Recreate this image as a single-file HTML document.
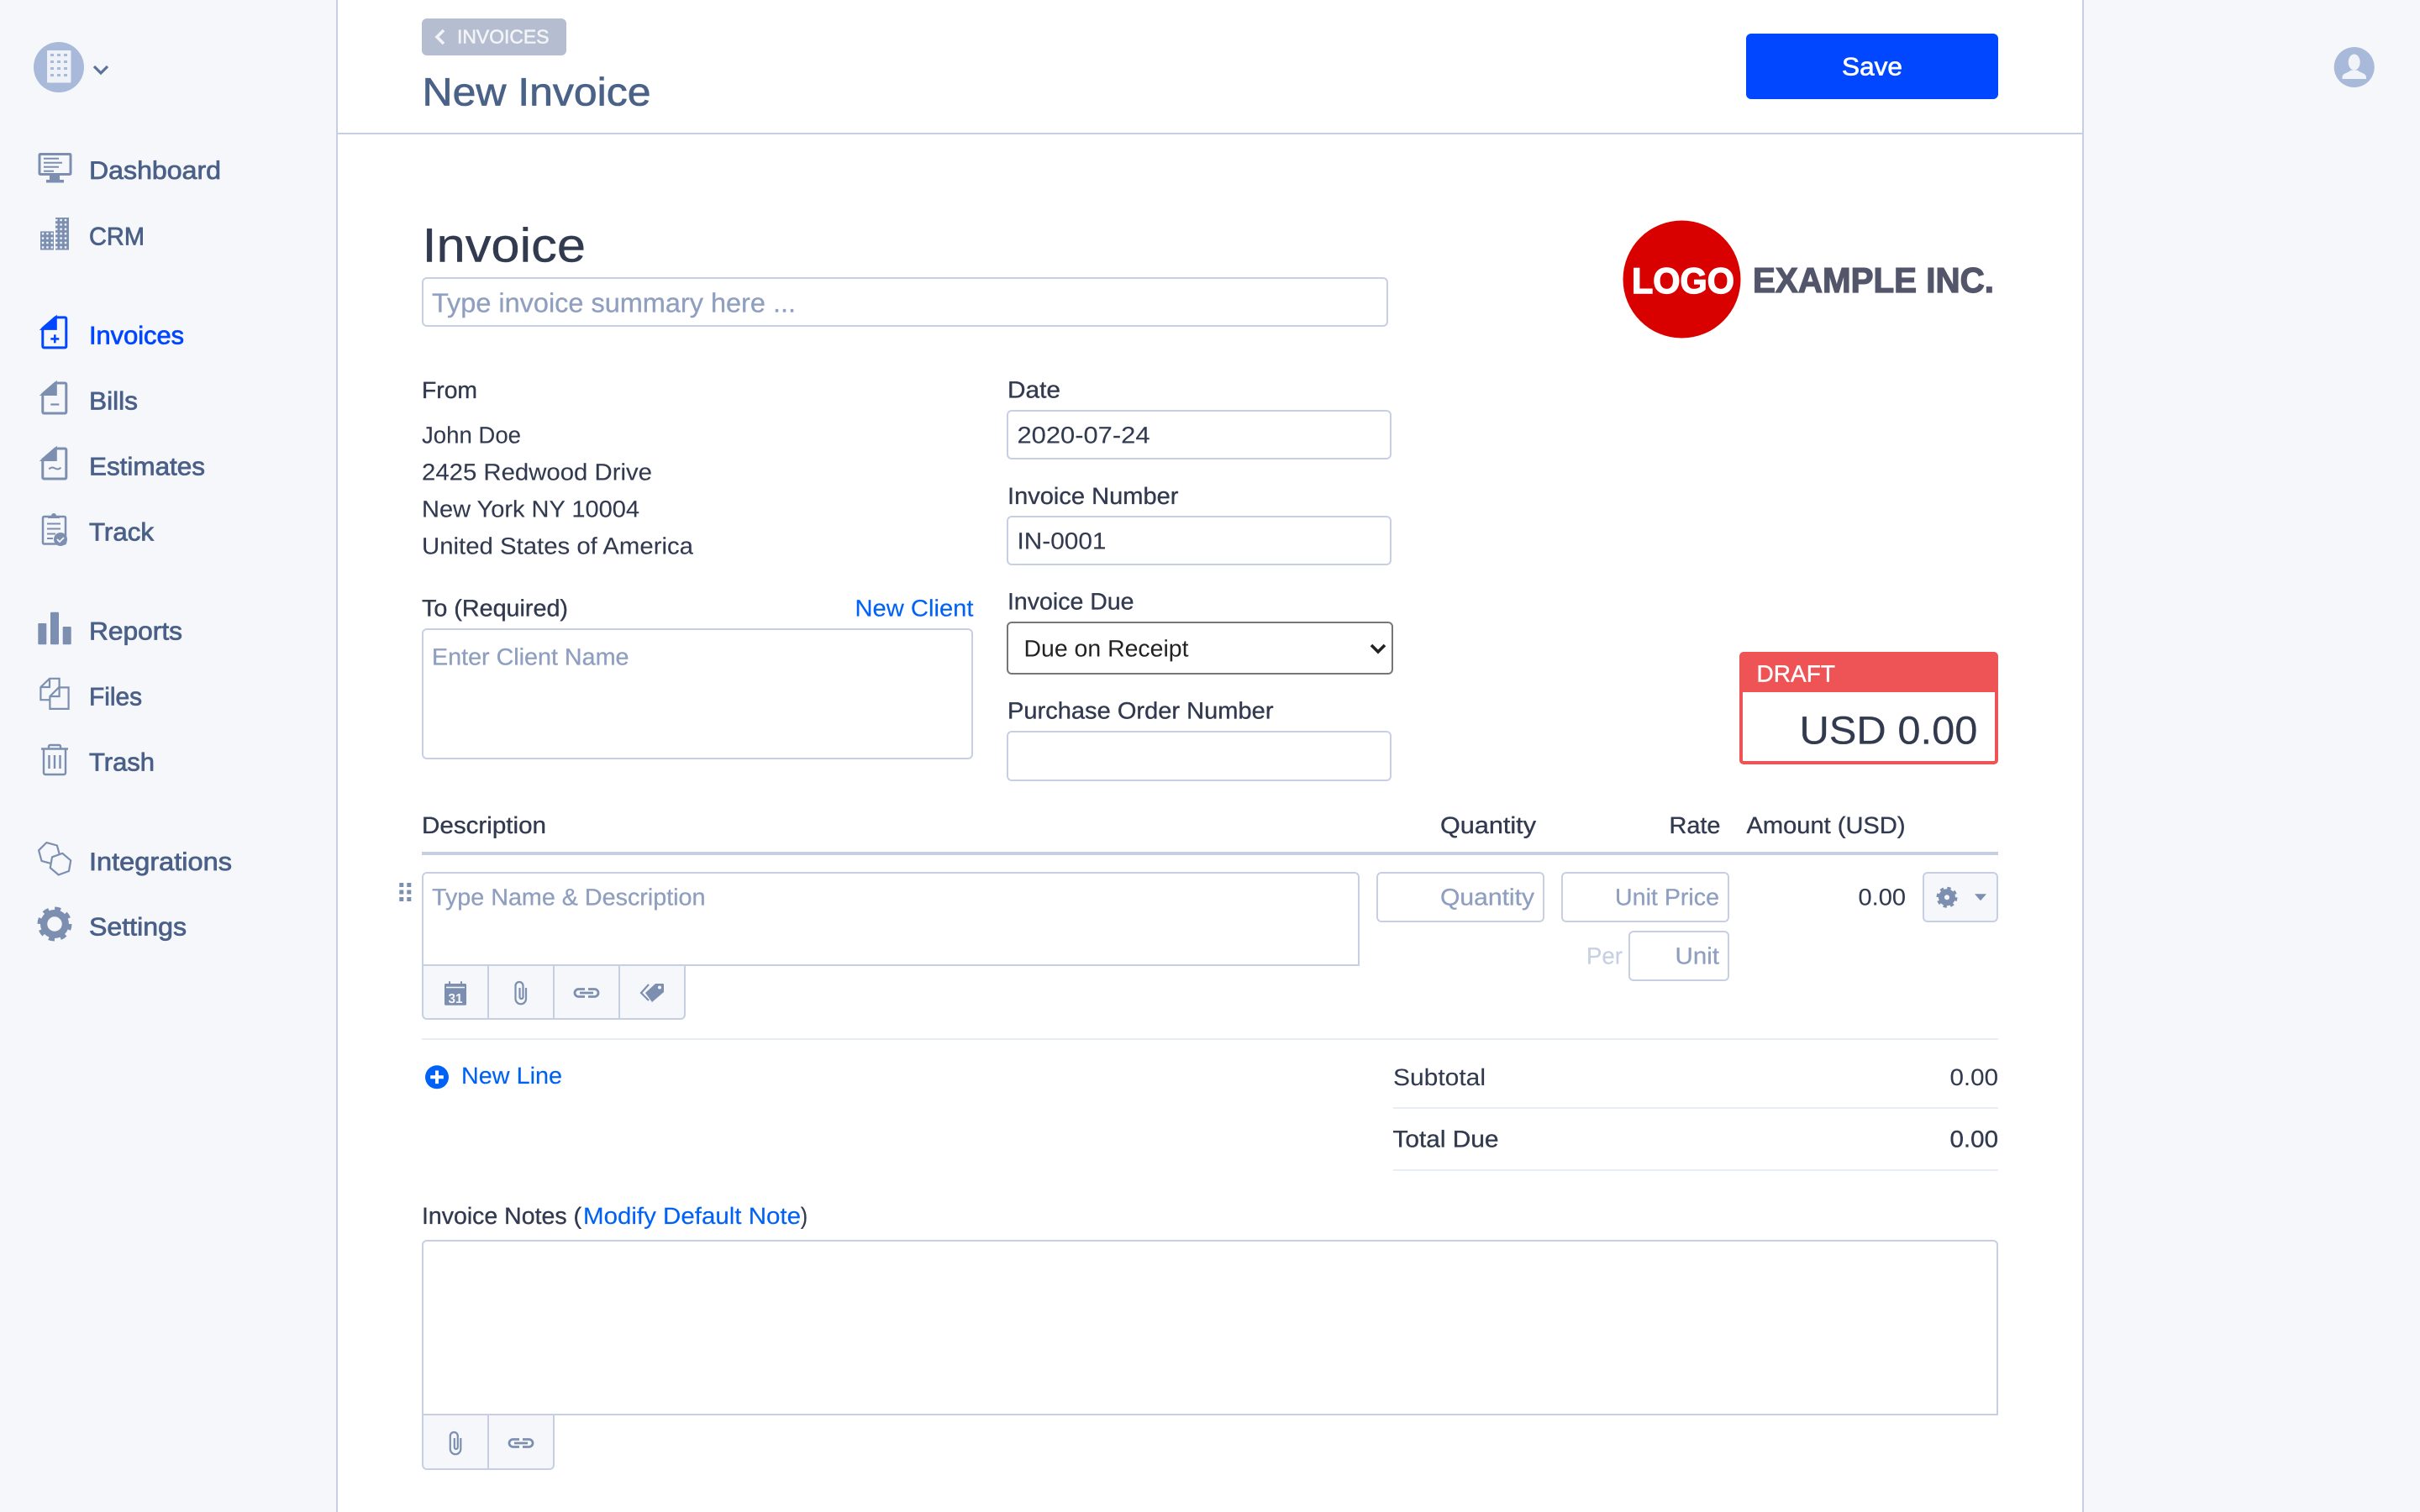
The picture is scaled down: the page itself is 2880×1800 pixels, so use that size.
<!DOCTYPE html>
<html lang="en"><head><meta charset="utf-8"><title>New Invoice</title>
<style>
html,body{margin:0;padding:0;background:#fff;width:2880px;height:1800px;overflow:hidden}
.a{position:absolute;box-sizing:border-box}
.b{position:absolute;box-sizing:border-box;border:2px solid #c6d0e2;border-radius:6px;background:#fff}
.g{background:#f5f7fa}
svg{position:absolute;left:0;top:0}
text{font-family:"Liberation Sans",sans-serif;text-rendering:geometricPrecision;white-space:pre}
.n{font-size:30px;fill:#4a6088;stroke:#4a6088;stroke-width:.75px}
.l{font-size:28px;fill:#323a50;stroke:#323a50;stroke-width:.35px}
.p{font-size:28px;fill:#8f9fc0;stroke:#8f9fc0;stroke-width:.3px}
.t{font-size:28px;fill:#323a50;stroke:#323a50;stroke-width:.1px}
.k{font-size:28px;fill:#0062f5;stroke:#0062f5;stroke-width:.15px}
.i{fill:#7d8fb0}
.o{fill:none;stroke:#7d8fb0;stroke-width:3}
</style></head><body>
<div class="a g" style="left:0;top:0;width:402px;height:1800px;border-right:2px solid #c6d0e2"></div>
<div class="a g" style="left:2478px;top:0;width:402px;height:1800px;border-left:2px solid #c6d0e2"></div>
<div class="a" style="left:402px;top:158px;width:2076px;height:2px;background:#c6d0e2"></div>
<div class="a" style="left:502px;top:22px;width:172px;height:44px;background:#b5bdd0;border-radius:6px"></div>
<div class="a" style="left:2078px;top:40px;width:300px;height:78px;background:#0047ff;border-radius:6px"></div>
<div class="b" style="left:502px;top:330px;width:1150px;height:59px"></div>
<div class="b" style="left:1198px;top:488px;width:458px;height:59px"></div>
<div class="b" style="left:1198px;top:614px;width:458px;height:59px"></div>
<div class="b" style="left:1198px;top:740px;width:460px;height:63px;border-color:#767676"></div>
<div class="b" style="left:1198px;top:870px;width:458px;height:59.500px"></div>
<div class="b" style="left:502px;top:748px;width:656px;height:156px"></div>
<div class="a" style="left:2070px;top:776px;width:308px;height:134px;border:4px solid #ee5355;border-top-width:48px;border-radius:5px;background:#fff"></div>
<div class="a" style="left:502px;top:1014px;width:1876px;height:4px;background:#c6d0e2"></div>
<div class="b" style="left:502px;top:1038px;width:1116px;height:112px;border-radius:6px 6px 0 0"></div>
<div class="a g" style="left:502px;top:1148px;width:314px;height:66px;border:2px solid #c6d0e2;border-radius:0 0 6px 6px"></div>
<div class="a" style="left:580px;top:1148px;width:2px;height:66px;background:#c6d0e2"></div>
<div class="a" style="left:658px;top:1148px;width:2px;height:66px;background:#c6d0e2"></div>
<div class="a" style="left:736px;top:1148px;width:2px;height:66px;background:#c6d0e2"></div>
<div class="b" style="left:1638px;top:1038px;width:200px;height:60px"></div>
<div class="b" style="left:1858px;top:1038px;width:200px;height:60px"></div>
<div class="b" style="left:1938px;top:1108px;width:120px;height:60px"></div>
<div class="b g" style="left:2288px;top:1038px;width:90px;height:60px"></div>
<div class="a" style="left:502px;top:1236px;width:1876px;height:2px;background:#e8ecf5"></div>
<div class="a" style="left:1658px;top:1318px;width:720px;height:2px;background:#e8ecf5"></div>
<div class="a" style="left:1658px;top:1392px;width:720px;height:2px;background:#e8ecf5"></div>
<div class="b" style="left:502px;top:1476px;width:1876px;height:209px;border-radius:6px 6px 0 0"></div>
<div class="a g" style="left:502px;top:1683px;width:158px;height:67px;border:2px solid #c6d0e2;border-radius:0 0 6px 6px"></div>
<div class="a" style="left:580px;top:1683px;width:2px;height:67px;background:#c6d0e2"></div>

<svg width="2880" height="1800" viewBox="0 0 2880 1800" xmlns="http://www.w3.org/2000/svg">
<defs>
<pattern id="w" x="48" y="259" width="5.4" height="5.4" patternUnits="userSpaceOnUse"><rect x="1.8" y="1.8" width="2.4" height="2.4" fill="#f5f7fa"/></pattern>
</defs>
<!-- org avatar -->
<circle cx="70" cy="80" r="30" fill="#a8b9d9"/>
<rect x="56" y="60" width="28.5" height="38.5" rx="1" fill="#eef1f7"/>
<g fill="#a8b9d9"><rect x="60" y="64" width="4" height="3"/><rect x="68" y="64" width="4" height="3"/><rect x="76" y="64" width="4" height="3"/><rect x="60" y="72" width="4" height="3"/><rect x="68" y="72" width="4" height="3"/><rect x="76" y="72" width="4" height="3"/><rect x="60" y="80" width="4" height="3"/><rect x="68" y="80" width="4" height="3"/><rect x="76" y="80" width="4" height="3"/><rect x="60" y="88" width="4" height="3"/><rect x="68" y="88" width="4" height="3"/><rect x="76" y="88" width="4" height="3"/></g>
<path d="M112 79l8 8 8-8" fill="none" stroke="#5d7299" stroke-width="3.2"/>
<!-- dashboard -->
<rect x="47" y="183.5" width="37" height="24" rx="1" class="o"/>
<path d="M52 188.8h18M52 193.8h22M52 198.8h18M52 203.8h12" stroke="#7d8fb0" stroke-width="2" fill="none"/>
<path d="M59 208h12v6h5v3.5H55V214h4z" class="i"/>
<!-- crm -->
<rect x="48" y="275.4" width="16" height="22.1" fill="#7d8fb0"/><rect x="48" y="275.4" width="16" height="22.1" fill="url(#w)"/>
<rect x="66" y="259" width="16" height="38.5" fill="#7d8fb0"/><rect x="66" y="259" width="16" height="38.5" fill="url(#w)"/>
<!-- invoices -->
<g transform="translate(49.3 376.4)" fill="none" stroke="#0047ff" stroke-width="3">
<path d="M1.5 14.5L16.5 1.5H28a1.5 1.5 0 0 1 1.5 1.5V36a1.5 1.5 0 0 1-1.5 1.5H3A1.5 1.5 0 0 1 1.5 36z"/>
<path d="M1.5 15L17 1.5V15z" fill="#0047ff"/>
<path d="M11 27h10M16 22v10" stroke-width="2.6"/></g>
<!-- bills -->
<g transform="translate(49.3 454.5)" fill="none" stroke="#7d8fb0" stroke-width="3">
<path d="M1.5 14.5L16.5 1.5H28a1.5 1.5 0 0 1 1.5 1.5V36a1.5 1.5 0 0 1-1.5 1.5H3A1.5 1.5 0 0 1 1.5 36z"/>
<path d="M1.5 15L17 1.5V15z" fill="#7d8fb0"/>
<path d="M11 27h10" stroke-width="2.2"/></g>
<!-- estimates -->
<g transform="translate(49.3 532.5)" fill="none" stroke="#7d8fb0" stroke-width="3">
<path d="M1.5 14.5L16.5 1.5H28a1.5 1.5 0 0 1 1.5 1.5V36a1.5 1.5 0 0 1-1.5 1.5H3A1.5 1.5 0 0 1 1.5 36z"/>
<path d="M1.5 15L17 1.5V15z" fill="#7d8fb0"/>
<path d="M9 26c3-3 5-2 7-1s5 2 7-1" stroke-width="2"/></g>
<!-- track -->
<g fill="none" stroke="#7d8fb0">
<rect x="51" y="615" width="27" height="32.5" rx="1.5" stroke-width="2.5"/>
<path d="M56 623.5h16M56 629.5h16M56 635.5h10M56 641h7" stroke-width="2"/>
<path d="M57 617v-3h4a3 3 0 0 1 6 0h4v3z" fill="#7d8fb0" stroke="none"/></g>
<circle cx="72" cy="642" r="8" fill="#7d8fb0"/><path d="M68 642l3 3 5-5" fill="none" stroke="#f5f7fa" stroke-width="1.8"/>
<!-- reports -->
<g class="i"><rect x="45.3" y="742" width="10" height="25.3" rx="1"/><rect x="60" y="728.7" width="10" height="38.6" rx="1"/><rect x="74.7" y="746" width="10" height="21.3" rx="1"/></g>
<!-- files -->
<g fill="none" stroke="#7d8fb0" stroke-width="2.2">
<path d="M48.4 818L59 807.8H70.6V833.2H48.4z"/><path d="M59 807.8V818H48.4"/>
<path d="M59.4 829L70 818.4H81.6V843.9H59.4z" fill="#f5f7fa"/><path d="M70.6 818.4V829H59.4"/></g>
<!-- trash -->
<g fill="none" stroke="#7d8fb0" stroke-width="2.4">
<path d="M49 891.5h32"/><path d="M58 891v-2.5a1.5 1.5 0 0 1 1.5-1.5h11a1.5 1.5 0 0 1 1.5 1.5V891"/>
<path d="M52 892v28a2 2 0 0 0 2 2h22a2 2 0 0 0 2-2V892"/>
<path d="M58.5 899v16M65 899v16M71.5 899v16"/></g>
<!-- integrations -->
<g fill="none" stroke="#7d8fb0" stroke-width="2.2" stroke-linejoin="round">
<path d="M55.3 1003.1L67.9 1006.5 71.3 1019 62 1028.3 49.5 1024.9 46.1 1012.3z"/>
<path d="M74.3 1015.9L84.2 1024.3 82 1037 69.7 1041.5 59.8 1033.1 62 1020.3z" fill="#f5f7fa"/></g>
<!-- settings -->
<circle cx="65" cy="1100" r="12.5" fill="none" stroke="#7d8fb0" stroke-width="9"/>
<circle cx="65" cy="1100" r="17" fill="none" stroke="#7d8fb0" stroke-width="7" stroke-dasharray="6.6 6.75"/>
<circle cx="65" cy="1100" r="7.5" fill="none" stroke="#f5f7fa" stroke-width="2.5"/>
<circle cx="65" cy="1100" r="3.2" fill="#f5f7fa"/>
<!-- sidebar text -->
<text class="n" x="106" y="213" textLength="157" lengthAdjust="spacingAndGlyphs">Dashboard</text>
<text class="n" x="106" y="291.4" textLength="66" lengthAdjust="spacingAndGlyphs">CRM</text>
<text class="n" x="106" y="409.6" textLength="113" lengthAdjust="spacingAndGlyphs" style="fill:#0047ff;stroke:#0047ff">Invoices</text>
<text class="n" x="106" y="487.5" textLength="58" lengthAdjust="spacingAndGlyphs">Bills</text>
<text class="n" x="106" y="565.5" textLength="138" lengthAdjust="spacingAndGlyphs">Estimates</text>
<text class="n" x="106" y="643.5" textLength="77" lengthAdjust="spacingAndGlyphs">Track</text>
<text class="n" x="106" y="761.7" textLength="111" lengthAdjust="spacingAndGlyphs">Reports</text>
<text class="n" x="106" y="839.3" textLength="63" lengthAdjust="spacingAndGlyphs">Files</text>
<text class="n" x="106" y="917.3" textLength="78" lengthAdjust="spacingAndGlyphs">Trash</text>
<text class="n" x="106" y="1036" textLength="170" lengthAdjust="spacingAndGlyphs">Integrations</text>
<text class="n" x="106" y="1113.3" textLength="116" lengthAdjust="spacingAndGlyphs">Settings</text>
<!-- header -->
<path d="M528 36l-8 8 8 8" fill="none" stroke="#f2f4f8" stroke-width="3.6"/>
<text x="544" y="51.7" font-size="23" fill="#f2f4f8" stroke="#f2f4f8" stroke-width=".6" textLength="109.500" lengthAdjust="spacingAndGlyphs">INVOICES</text>
<text x="502.500" y="125.7" font-size="47" fill="#4b6288" stroke="#4b6288" stroke-width=".7" textLength="272" lengthAdjust="spacingAndGlyphs">New Invoice</text>
<text x="2192" y="89.3" font-size="30" fill="#fff" stroke="#fff" stroke-width=".7" textLength="72" lengthAdjust="spacingAndGlyphs">Save</text>
<circle cx="2801.7" cy="80" r="24" fill="#a8b9d9"/>
<ellipse cx="2801.7" cy="74" rx="7" ry="9.5" fill="#f0f3f8"/>
<path d="M2787.5 94v-2c0-5 7-5 10.500-8.500h7.500c3.500 3.500 10.500 3.500 10.500 8.500v2z" fill="#f0f3f8"/>
<!-- invoice title -->
<text x="502.500" y="311.7" font-size="57" fill="#323a50" stroke="#323a50" stroke-width=".4" textLength="194.500" lengthAdjust="spacingAndGlyphs">Invoice</text>
<text class="p" x="514" y="371.7" style="font-size:32px" textLength="433" lengthAdjust="spacingAndGlyphs">Type invoice summary here ...</text>
<!-- logo -->
<circle cx="2001.5" cy="332.5" r="70" fill="#d90000"/>
<text x="1942" y="349" font-size="43" font-weight="700" fill="#fff" stroke="#fff" stroke-width="1.4" textLength="122" lengthAdjust="spacingAndGlyphs">LOGO</text>
<text x="2086" y="348" font-size="42" font-weight="700" fill="#53566a" stroke="#53566a" stroke-width="1.3" textLength="287" lengthAdjust="spacingAndGlyphs">EXAMPLE INC.</text>
<!-- from -->
<text class="l" x="502" y="474" textLength="66" lengthAdjust="spacingAndGlyphs">From</text>
<text class="t" x="502" y="527.6" textLength="118" lengthAdjust="spacingAndGlyphs">John Doe</text>
<text class="t" x="502" y="571.6" textLength="274" lengthAdjust="spacingAndGlyphs">2425 Redwood Drive</text>
<text class="t" x="502" y="615.6" textLength="259" lengthAdjust="spacingAndGlyphs">New York NY 10004</text>
<text class="t" x="502" y="659.6" textLength="323" lengthAdjust="spacingAndGlyphs">United States of America</text>
<text class="l" x="502" y="733.5" textLength="174" lengthAdjust="spacingAndGlyphs">To (Required)</text>
<text class="k" x="1017.500" y="733.5" textLength="141" lengthAdjust="spacingAndGlyphs">New Client</text>
<text class="p" x="514" y="791.7" textLength="234.500" lengthAdjust="spacingAndGlyphs">Enter Client Name</text>
<!-- right fields -->
<text class="l" x="1199" y="473.3" textLength="63" lengthAdjust="spacingAndGlyphs">Date</text>
<text class="t" x="1210.500" y="527.3" textLength="158" lengthAdjust="spacingAndGlyphs">2020-07-24</text>
<text class="l" x="1199" y="600" textLength="203.500" lengthAdjust="spacingAndGlyphs">Invoice Number</text>
<text class="t" x="1210.500" y="653.3" textLength="106" lengthAdjust="spacingAndGlyphs">IN-0001</text>
<text class="l" x="1199" y="725.7" textLength="150.500" lengthAdjust="spacingAndGlyphs">Invoice Due</text>
<text x="1218.500" y="781.7" font-size="28" fill="#222" textLength="196" lengthAdjust="spacingAndGlyphs">Due on Receipt</text>
<path d="M1632 768l8 8 8-8" fill="none" stroke="#222" stroke-width="3.6"/>
<text class="l" x="1199" y="855.500" textLength="316.500" lengthAdjust="spacingAndGlyphs">Purchase Order Number</text>
<!-- draft -->
<text x="2090.500" y="811.7" font-size="28" fill="#fff" stroke="#fff" stroke-width=".4" textLength="93.500" lengthAdjust="spacingAndGlyphs">DRAFT</text>
<text x="2141.500" y="885.3" font-size="47" fill="#323a50" stroke="#323a50" stroke-width=".2" textLength="212" lengthAdjust="spacingAndGlyphs">USD 0.00</text>
<!-- table head -->
<text class="l" x="502" y="992" textLength="148" lengthAdjust="spacingAndGlyphs">Description</text>
<text class="l" x="1714" y="992" textLength="114" lengthAdjust="spacingAndGlyphs">Quantity</text>
<text class="l" x="1986.500" y="992" textLength="61" lengthAdjust="spacingAndGlyphs">Rate</text>
<text class="l" x="2078.500" y="992" textLength="189" lengthAdjust="spacingAndGlyphs">Amount (USD)</text>
<!-- line -->
<g fill="#7d8fb0"><rect x="475.3" y="1051" width="5" height="5"/><rect x="484.3" y="1051" width="5" height="5"/><rect x="475.3" y="1059.5" width="5" height="5"/><rect x="484.3" y="1059.5" width="5" height="5"/><rect x="475.3" y="1068" width="5" height="5"/><rect x="484.3" y="1068" width="5" height="5"/></g>
<text class="p" x="514" y="1077.500" textLength="325.500" lengthAdjust="spacingAndGlyphs">Type Name &amp; Description</text>
<text class="p" x="1714" y="1077.3" textLength="112" lengthAdjust="spacingAndGlyphs">Quantity</text>
<text class="p" x="1922" y="1077.3" textLength="124" lengthAdjust="spacingAndGlyphs">Unit Price</text>
<text class="t" x="2211.500" y="1077.3" textLength="56.500" lengthAdjust="spacingAndGlyphs">0.00</text>
<circle cx="2317" cy="1068.3" r="6.500" fill="none" stroke="#7d8fb0" stroke-width="7"/>
<circle cx="2317" cy="1068.3" r="10.500" fill="none" stroke="#7d8fb0" stroke-width="4" stroke-dasharray="4.100 4.150"/>
<path d="M2350 1064.3h14l-7 8z" class="i"/>
<text x="1888" y="1147.3" font-size="28" fill="#c6d0e2" stroke="#c6d0e2" stroke-width=".2" textLength="43" lengthAdjust="spacingAndGlyphs">Per</text>
<text class="p" x="1993.500" y="1147.3" textLength="52.500" lengthAdjust="spacingAndGlyphs">Unit</text>
<!-- toolbar icons -->
<path d="M529 1172.5a1.5 1.5 0 0 1 1.5-1.5h23a1.5 1.5 0 0 1 1.5 1.5v22.7a1.5 1.5 0 0 1-1.5 1.5h-23a1.5 1.5 0 0 1-1.5-1.5z" class="i"/>
<path d="M535 1168.3v6M549 1168.3v6" stroke="#7d8fb0" stroke-width="2"/>
<path d="M531 1175.5h22" stroke="#f5f7fa" stroke-width="1.5"/>
<text x="533.500" y="1194" font-size="16" font-weight="700" fill="#f5f7fa" textLength="17" lengthAdjust="spacingAndGlyphs">31</text>
<g transform="translate(613 1168)"><path d="M13 8V21a6 6 0 0 1-12.500 0V5.500a4.500 4.500 0 0 1 9 0V19a2 2 0 0 1-4 0V8" fill="none" stroke="#7d8fb0" stroke-width="2.2"/></g>
<path d="M696 1177.500h-7.500a4.500 4.500 0 0 0 0 9H696M700 1177.500h7.500a4.500 4.500 0 0 1 0 9H700M690 1182h16" fill="none" stroke="#7d8fb0" stroke-width="2.8"/>
<path d="M768 1182l12-11h9a1 1 0 0 1 1 1v9l-14 12z" class="i"/><circle cx="785" cy="1175.5" r="2" fill="#f5f7fa"/>
<path d="M772 1172l-9 10 9 9" fill="none" stroke="#7d8fb0" stroke-width="2.2"/>
<!-- new line -->
<circle cx="520" cy="1282.3" r="14" fill="#0062f5"/>
<path d="M520 1274.5v15.600M512.200 1282.3h15.600" stroke="#fff" stroke-width="4"/>
<text class="k" x="549" y="1290" textLength="120" lengthAdjust="spacingAndGlyphs">New Line</text>
<!-- totals -->
<text class="t" x="1658" y="1292" textLength="110" lengthAdjust="spacingAndGlyphs">Subtotal</text>
<text class="t" x="2320.500" y="1292" textLength="57.500" lengthAdjust="spacingAndGlyphs">0.00</text>
<text class="l" x="1657.500" y="1365.5" textLength="126" lengthAdjust="spacingAndGlyphs">Total Due</text>
<text class="l" x="2320.500" y="1365.5" textLength="57.500" lengthAdjust="spacingAndGlyphs">0.00</text>
<!-- notes -->
<text class="l" x="502" y="1457" textLength="190" lengthAdjust="spacingAndGlyphs">Invoice Notes (</text>
<text class="k" x="694" y="1457" textLength="259" lengthAdjust="spacingAndGlyphs">Modify Default Note</text>
<text class="l" x="953" y="1457" textLength="8" lengthAdjust="spacingAndGlyphs">)</text>
<g transform="translate(535.300 1704)"><path d="M13 8V21a6 6 0 0 1-12.500 0V5.500a4.500 4.500 0 0 1 9 0V19a2 2 0 0 1-4 0V8" fill="none" stroke="#7d8fb0" stroke-width="2.2"/></g>
<path d="M618 1713.500h-7.500a4.500 4.500 0 0 0 0 9H618M622 1713.500h7.500a4.500 4.500 0 0 1 0 9H622M612 1718h16" fill="none" stroke="#7d8fb0" stroke-width="2.8"/>
</svg>
</body></html>
